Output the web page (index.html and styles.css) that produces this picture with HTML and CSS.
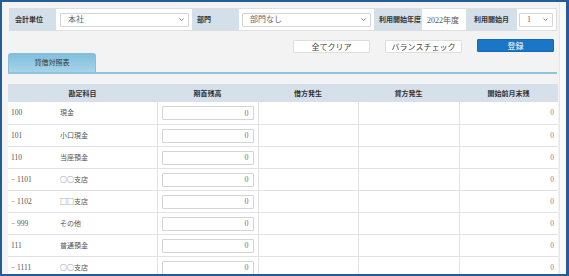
FILE: index.html
```html
<!DOCTYPE html>
<html lang="ja">
<head>
    <meta charset="UTF-8">
    <meta name="viewport" content="width=device-width, initial-scale=1.0">
    <title>開始残高登録</title>
    <link rel="stylesheet" href="styles.css">
</head>
<body>
    <div class="window">
        <div class="page">
            <div class="filters">
                <div class="filters__label filters__label--w46">会計単位</div>
                <div class="filters__value filters__value--w136">
                    <div class="select">本社<span class="select__arrow"><svg width="5" height="3" viewBox="0 0 5 3"><path d="M0.5 0.5 L2.5 2.5 L4.5 0.5" fill="none" stroke="#777" stroke-width="0.9"/></svg></span></div>
                </div>
                <div class="filters__label filters__label--w47">部門</div>
                <div class="filters__value filters__value--w135">
                    <div class="select">部門なし<span class="select__arrow"><svg width="5" height="3" viewBox="0 0 5 3"><path d="M0.5 0.5 L2.5 2.5 L4.5 0.5" fill="none" stroke="#777" stroke-width="0.9"/></svg></span></div>
                </div>
                <div class="filters__label filters__label--w48">利用開始年度</div>
                <div class="filters__value filters__value--w44 filters__value--text">2022年度</div>
                <div class="filters__label filters__label--w51">利用開始月</div>
                <div class="filters__value filters__value--w39">
                    <div class="select">1<span class="select__arrow"><svg width="5" height="3" viewBox="0 0 5 3"><path d="M0.5 0.5 L2.5 2.5 L4.5 0.5" fill="none" stroke="#777" stroke-width="0.9"/></svg></span></div>
                </div>
            </div>

            <div class="actions">
                <button class="btn">全てクリア</button>
                <button class="btn">バランスチェック</button>
                <button class="btn btn--primary">登録</button>
            </div>

            <div class="tabs">
                <div class="tab">貸借対照表</div>
            </div>

            <table class="sheet">
                <colgroup>
                    <col class="sheet__col-account">
                    <col class="sheet__col-open">
                    <col class="sheet__col-debit">
                    <col class="sheet__col-credit">
                    <col class="sheet__col-prev">
                </colgroup>
                <thead>
                    <tr>
                        <th>勘定科目</th>
                        <th>期首残高</th>
                        <th>借方発生</th>
                        <th>貸方発生</th>
                        <th>開始前月末残</th>
                    </tr>
                </thead>
                <tbody>
                    <tr>
                        <td class="account"><span class="account__code">100</span><span class="account__name">現金</span></td>
                        <td class="entry"><input class="entry__input" type="text" value="0"></td>
                        <td></td><td></td>
                        <td class="amount">0</td>
                    </tr>
                    <tr>
                        <td class="account"><span class="account__code">101</span><span class="account__name">小口現金</span></td>
                        <td class="entry"><input class="entry__input" type="text" value="0"></td>
                        <td></td><td></td>
                        <td class="amount">0</td>
                    </tr>
                    <tr>
                        <td class="account"><span class="account__code">110</span><span class="account__name">当座預金</span></td>
                        <td class="entry"><input class="entry__input" type="text" value="0"></td>
                        <td></td><td></td>
                        <td class="amount">0</td>
                    </tr>
                    <tr>
                        <td class="account"><span class="account__code">− 1101</span><span class="account__name">○○支店</span></td>
                        <td class="entry"><input class="entry__input" type="text" value="0"></td>
                        <td></td><td></td>
                        <td class="amount">0</td>
                    </tr>
                    <tr>
                        <td class="account"><span class="account__code">− 1102</span><span class="account__name">□□支店</span></td>
                        <td class="entry"><input class="entry__input" type="text" value="0"></td>
                        <td></td><td></td>
                        <td class="amount">0</td>
                    </tr>
                    <tr>
                        <td class="account"><span class="account__code">− 999</span><span class="account__name">その他</span></td>
                        <td class="entry"><input class="entry__input" type="text" value="0"></td>
                        <td></td><td></td>
                        <td class="amount">0</td>
                    </tr>
                    <tr>
                        <td class="account"><span class="account__code">111</span><span class="account__name">普通預金</span></td>
                        <td class="entry"><input class="entry__input" type="text" value="0"></td>
                        <td></td><td></td>
                        <td class="amount">0</td>
                    </tr>
                    <tr>
                        <td class="account"><span class="account__code">− 1111</span><span class="account__name">○○支店</span></td>
                        <td class="entry"><input class="entry__input" type="text" value="0"></td>
                        <td></td><td></td>
                        <td class="amount">0</td>
                    </tr>
                </tbody>
            </table>
        </div>
        <div class="scroll-track"></div>
    </div>
</body>
</html>
```

FILE: styles.css
```css
body {
    margin: 0;
    background-color: #fff;
    font-family: 'Liberation Serif', 'Noto Sans CJK JP', sans-serif;
    color: #555;
}

.window {
    width: 569px;
    height: 276px;
    box-sizing: border-box;
    border: 2px solid #245c95;
    border-right-width: 3px;
    display: flex;
    overflow: hidden;
    background-color: #f3f3f3;
}

.page {
    flex: 1;
    min-width: 0;
    padding: 6px 1px 0 6px;
}

.scroll-track {
    width: 6px;
    background-color: #f8f8f8;
    border-left: 1px solid #e6e6e6;
}

/* filter bar */
.filters {
    display: flex;
    height: 23px;
    margin: 0 1px;
    box-sizing: border-box;
    background-color: #fff;
    border: 1px solid #dedede;
}

.filters__label {
    background-color: #d3dfe9;
    font-family: 'Liberation Sans', 'Noto Sans CJK JP', sans-serif;
    font-size: 7px;
    font-weight: bold;
    color: #333;
    padding: 5px 0 0 5px;
    box-sizing: border-box;
}

.filters__value {
    display: flex;
    align-items: center;
    padding: 0 3px 0 4px;
    box-sizing: border-box;
}

.filters__value--text {
    font-size: 8px;
    padding-left: 5px;
}

.filters__label--w46 { width: 46px; }
.filters__label--w47 { width: 47px; }
.filters__label--w48 { width: 48px; }
.filters__label--w51 { width: 51px; padding-left: 8px; }
.filters__value--w136 { width: 136px; }
.filters__value--w135 { width: 135px; padding-left: 3px; }
.filters__value--w44 { width: 44px; }
.filters__value--w39 { width: 39px; padding-left: 2px; }

.select {
    flex: 1;
    height: 14px;
    box-sizing: border-box;
    border: 1px solid #d4d4d4;
    border-radius: 1px;
    background-color: #fff;
    font-size: 8px;
    line-height: 12px;
    padding-left: 7px;
    color: #666;
    display: flex;
    justify-content: space-between;
    align-items: center;
}

.select__arrow {
    display: flex;
    padding-right: 4px;
}

/* buttons */
.actions {
    display: flex;
    justify-content: flex-end;
    gap: 15px;
    margin-top: 8px;
    padding-right: 4px;
    height: 14px;
}

.btn {
    width: 77px;
    height: 13px;
    margin-top: 1px;
    padding: 0;
    border: 1px solid #dedede;
    border-radius: 1px;
    background-color: #fff;
    font-family: 'Liberation Sans', 'Noto Sans CJK JP', sans-serif;
    font-size: 8px;
    color: #444;
    cursor: pointer;
}

.btn--primary {
    margin-top: 0;
    background-color: #1a76c6;
    border-color: #1769b2;
    color: #fff;
}

/* tabs */
.tabs {
    display: flex;
    border-bottom: 2px solid #8ec4dd;
    margin-right: 1px;
}

.tab {
    width: 88px;
    height: 19px;
    box-sizing: border-box;
    background: linear-gradient(#80bfdc, #a6d4e9);
    border: 1px solid #88bdd6;
    border-bottom: none;
    border-radius: 3px 3px 0 0;
    text-align: center;
    font-family: 'Liberation Sans', 'Noto Sans CJK JP', sans-serif;
    font-size: 7px;
    line-height: 18px;
    color: #333;
}

/* balance sheet table */
.sheet {
    width: 550px;
    margin-top: 10px;
    border-collapse: collapse;
    table-layout: fixed;
    background-color: #fff;
}

.sheet__col-account { width: 149px; }
.sheet__col-open { width: 101px; }
.sheet__col-debit { width: 100px; }
.sheet__col-credit { width: 101px; }
.sheet__col-prev { width: 99px; }

.sheet th {
    height: 18px;
    padding: 0;
    background-color: #d5e0ea;
    font-family: 'Liberation Sans', 'Noto Sans CJK JP', sans-serif;
    font-size: 7px;
    font-weight: bold;
    color: #333;
}

.sheet tbody tr {
    height: 22px;
}

.sheet td {
    padding: 0;
    vertical-align: top;
    border-bottom: 1px solid #e2e2e2;
    border-left: 1px solid #e2e2e2;
    font-size: 7.5px;
}

.sheet td.account {
    border-left: none;
    padding: 5px 0 0 3px;
    color: #555;
}

.account__code {
    display: inline-block;
    width: 49px;
}

.account__name {
    font-family: 'Noto Sans CJK JP', sans-serif;
    font-size: 7px;
}

.entry {
    padding: 4px 4px 0 4px !important;
}

.entry__input {
    display: block;
    width: 100%;
    height: 14px;
    box-sizing: border-box;
    border: 1px solid #d4d4d4;
    border-radius: 1px;
    padding: 0 4px 0 0;
    text-align: right;
    font-family: 'Liberation Serif', serif;
    font-size: 8px;
    color: #777;
}

.amount {
    text-align: right;
    padding: 6px 4px 0 0 !important;
    color: #888;
}
```
